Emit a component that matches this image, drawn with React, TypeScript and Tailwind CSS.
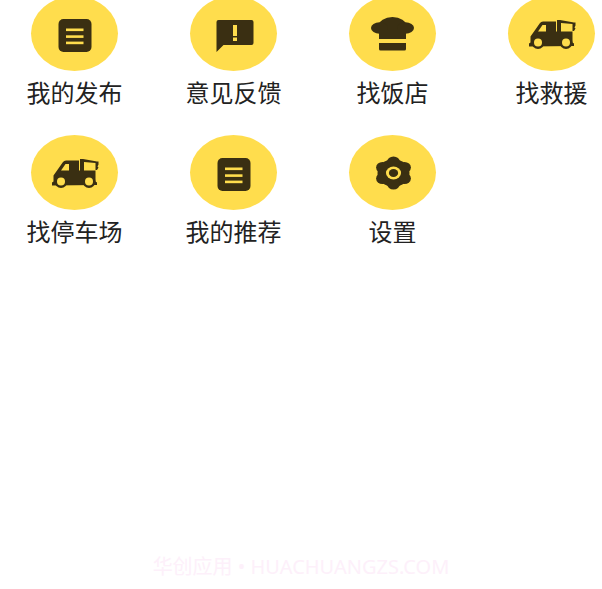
const ink = '#3a2f12'
const yellow = '#ffdd4d'

function DocIcon() {
  return (
    <svg viewBox="0 0 48 48" className="h-12 w-12">
      <rect x="7.500" y="9" width="33" height="33" rx="5" fill={ink} />
      <rect x="15" y="18.500" width="17.500" height="2.600" fill={yellow} />
      <rect x="15" y="25.300" width="17.500" height="2.600" fill={yellow} />
      <rect x="15" y="31.600" width="17.500" height="2.600" fill={yellow} />
    </svg>
  )
}

function MessageIcon() {
  return (
    <svg viewBox="0 0 48 48" className="h-12 w-12">
      <path d="M8.500 10h33a2 2 0 0 1 2 2v21a2 2 0 0 1-2 2H13.500l-7 7V12a2 2 0 0 1 2-2z" fill={ink} />
      <rect x="23" y="15" width="4" height="11" fill={yellow} />
      <rect x="23" y="27.500" width="4" height="3.500" fill={yellow} />
    </svg>
  )
}

function ChefIcon() {
  return (
    <svg viewBox="0 0 48 48" className="h-12 w-12">
      <ellipse cx="23.500" cy="16.500" rx="14" ry="9.500" fill={ink} />
      <ellipse cx="10.500" cy="18" rx="8.500" ry="5.800" fill={ink} />
      <ellipse cx="36.500" cy="18" rx="8.500" ry="5.800" fill={ink} />
      <path d="M10 20h27v9H10z" fill={ink} />
      <path d="M10 33h27v6a1.500 1.500 0 0 1-1.500 1.500h-24A1.500 1.500 0 0 1 10 39z" fill={ink} />
    </svg>
  )
}

function TruckIcon() {
  return (
    <svg viewBox="0 0 48 48" className="h-12 w-12">
      {/* body and cab */}
      <path d="M1 36.500v-3l1.500-1v-6L12 13q1-1.500 3-1.500h13v10h16.500v11l1.500 1v2.500z" fill={ink} />
      <path d="M14.500 15H18v6.500H10z" fill={yellow} />
      {/* crane arm */}
      <path d="M29 22V10h3l14 2.500h1.500v3l-1 2 1 1-1.500 2.500h-1.500v-7L33 13v9z" fill={ink} />
      <circle cx="10" cy="32.500" r="6.500" fill={ink} />
      <circle cx="10" cy="32.500" r="4" fill={yellow} />
      <circle cx="38" cy="32.500" r="6.500" fill={ink} />
      <circle cx="38" cy="32.500" r="4" fill={yellow} />
    </svg>
  )
}

function GearIcon() {
  return (
    <svg viewBox="0 0 48 48" className="h-12 w-12">
      <g transform="translate(24.500 24) scale(1.160 1)" fill={ink}>
        <circle r="13.800" />
        <circle cy="-11" r="5.500" />
        <circle cy="11" r="5.500" />
        <circle cx="-9.500" cy="-5.500" r="5.500" />
        <circle cx="9.500" cy="-5.500" r="5.500" />
        <circle cx="-9.500" cy="5.500" r="5.500" />
        <circle cx="9.500" cy="5.500" r="5.500" />
        <circle r="6.500" fill={yellow} />
        <circle r="4" />
      </g>
    </svg>
  )
}

const items = [
  { name: '我的发布', icon: <DocIcon /> },
  { name: '意见反馈', icon: <MessageIcon /> },
  { name: '找饭店', icon: <ChefIcon /> },
  { name: '找救援', icon: <TruckIcon /> },
  { name: '找停车场', icon: <TruckIcon /> },
  { name: '我的推荐', icon: <DocIcon /> },
  { name: '设置', icon: <GearIcon /> },
]

export default function App() {
  return (
    <div className="relative h-[589px] w-[602px] overflow-hidden bg-white font-['Noto_Sans_CJK_SC',sans-serif]">
      {/* Menu grid */}
      <div className="-mt-1 grid grid-cols-[repeat(4,87px)] gap-x-[72px] gap-y-[25px] pl-[31px]">
        {items.map((item) => (
          <div key={item.name} className="flex flex-col items-center">
            <div className="flex h-[75px] w-[87px] items-center justify-center rounded-[50%] bg-[#ffdd4d]">
              {item.icon}
            </div>
            <span className="mt-[3px] h-[36px] whitespace-nowrap text-2xl leading-[36px] text-[#222222]">
              {item.name}
            </span>
          </div>
        ))}
      </div>

      {/* Watermark */}
      <div className="absolute inset-x-0 bottom-[7px] text-center font-['Noto_Sans','Noto_Sans_CJK_SC',sans-serif] text-xl leading-[30px] text-[#fdf0fa]">
        华创应用 • HUACHUANGZS.COM
      </div>
    </div>
  )
}
